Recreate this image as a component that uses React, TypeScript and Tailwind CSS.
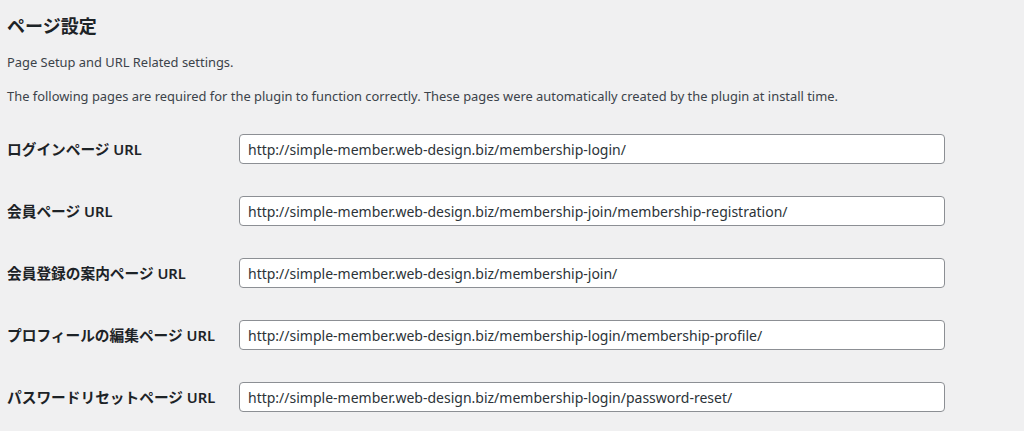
import React from "react";

const rows = [
  { label: "ログインページ URL", value: "http://simple-member.web-design.biz/membership-login/" },
  { label: "会員ページ URL", value: "http://simple-member.web-design.biz/membership-join/membership-registration/" },
  { label: "会員登録の案内ページ URL", value: "http://simple-member.web-design.biz/membership-join/" },
  { label: "プロフィールの編集ページ URL", value: "http://simple-member.web-design.biz/membership-login/membership-profile/" },
  { label: "パスワードリセットページ URL", value: "http://simple-member.web-design.biz/membership-login/password-reset/" },
];

export default function App() {
  return (
    <div
      className="w-[1024px] h-[431px] bg-[#f0f0f1] text-[#3c434a] overflow-hidden pl-[7px]"
      style={{ fontFamily: '"Noto Sans", "Noto Sans CJK JP", sans-serif' }}
    >
      <h2 className="pt-[14px] h-[38px] text-[18px] leading-[24px] font-semibold text-[#1d2327]">
        ページ設定
      </h2>
      <p className="mt-[14px] text-[12.9px] leading-[20px]">Page Setup and URL Related settings.</p>
      <p className="mt-[14px] text-[12.9px] leading-[20px]">
        The following pages are required for the plugin to function correctly. These pages were automatically created by the plugin at install time.
      </p>
      <div className="mt-[12px] flex flex-col">
        {rows.map((r) => (
          <div key={r.label} className="h-[62px] flex items-center">
            <div className="w-[232px] text-[14.7px] font-semibold text-[#1d2327]">{r.label}</div>
            <input
              readOnly
              value={r.value}
              className="w-[706px] h-[30px] bg-white border border-[#8c8f94] rounded-[4px] px-[8px] text-[14px] text-[#2c3338] outline-none"
            />
          </div>
        ))}
      </div>
    </div>
  );
}
